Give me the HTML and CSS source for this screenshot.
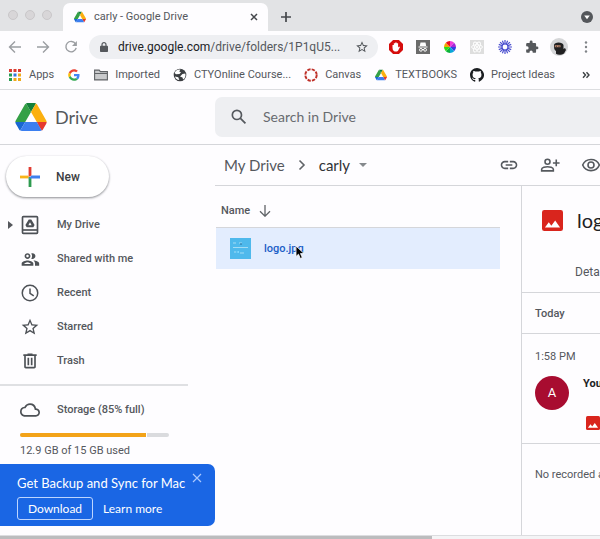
FILE: index.html
```html
<!DOCTYPE html>
<html lang="en">
<head>
<meta charset="utf-8">
<title>carly - Google Drive</title>
<link rel="stylesheet" href="styles.css">
</head>
<body>
<svg class="defs" aria-hidden="true">
  <symbol id="drive" viewBox="0 0 87.3 78">
    <path d="m6.6 66.85 3.85 6.65c.8 1.4 1.95 2.5 3.3 3.3l13.75-23.8h-27.5c0 1.55.4 3.1 1.2 4.5z" fill="#1967d2"/>
    <path d="m43.65 25-13.75-23.8c-1.35.8-2.5 1.9-3.3 3.3l-25.4 44a9.06 9.06 0 0 0-1.2 4.5h27.5z" fill="#34a046"/>
    <path d="m73.55 76.8c1.35-.8 2.5-1.9 3.3-3.3l1.6-2.75 7.65-13.25c.8-1.4 1.2-2.95 1.2-4.5h-27.5l5.85 11.5z" fill="#e5392f"/>
    <path d="m43.65 25 13.75-23.8c-1.35-.8-2.9-1.2-4.5-1.2h-18.5c-1.6 0-3.15.45-4.5 1.2z" fill="#14803a"/>
    <path d="m59.8 53h-32.3l-13.75 23.8c1.35.8 2.9 1.2 4.5 1.2h50.8c1.6 0 3.15-.45 4.5-1.2z" fill="#3c7ff0"/>
    <path d="m73.4 26.5-12.7-22c-.8-1.4-1.95-2.5-3.3-3.3l-13.75 23.8 16.15 28h27.45c0-1.55-.4-3.1-1.2-4.5z" fill="#fbb010"/>
  </symbol>
  <symbol id="image" viewBox="3 3 18 18">
    <path fill="#d9251d" d="M5 3h14a2 2 0 0 1 2 2v14a2 2 0 0 1-2 2H5a2 2 0 0 1-2-2V5a2 2 0 0 1 2-2z"/>
    <path fill="#fff" d="M5.500 18l3.300-4.400 2.200 2.800 3.300-4.400L18.500 18z"/>
  </symbol>
  <symbol id="star" viewBox="0 0 24 24">
    <path d="M22 9.240l-7.190-.62L12 2 9.190 8.630 2 9.240l5.460 4.730L5.820 21 12 17.270 18.180 21l-1.630-7.030L22 9.240zM12 15.400l-3.760 2.270 1-4.280-3.320-2.880 4.380-.38L12 6.100l1.710 4.040 4.380.38-3.320 2.880 1 4.280L12 15.400z"/>
  </symbol>
</svg>

<header class="browser">
  <div class="tabstrip">
    <div class="lights"><i></i><i></i><i></i></div>
    <div class="tab">
      <svg class="i12"><use href="#drive"/></svg>
      <span class="tab-title">carly - Google Drive</span>
      <button class="plain" aria-label="Close tab"><svg class="i8" viewBox="0 0 8 8"><path d="M1 1l6 6M7 1L1 7" stroke="#45484c" stroke-width="1.500"/></svg></button>
    </div>
    <button class="plain new-tab" aria-label="New tab"><svg class="i12" viewBox="0 0 12 12"><path d="M6 1v10M1 6h10" stroke="#45484c" stroke-width="1.700"/></svg></button>
    <button class="plain tab-search" aria-label="Search tabs"><svg class="i12" viewBox="0 0 12 12"><circle cx="6" cy="6" r="6" fill="#54575b"/><path d="M3.200 4.500h5.600L6 8.200z" fill="#fff"/></svg></button>
  </div>

  <div class="toolbar">
    <div class="history">
      <button class="plain" aria-label="Back"><svg class="i14" viewBox="0 0 14 14" fill="none" stroke="#9b9ea2" stroke-width="1.400"><path d="M13 7H2M7 1.500L1.500 7 7 12.500"/></svg></button>
      <button class="plain" aria-label="Forward"><svg class="i14" viewBox="0 0 14 14" fill="none" stroke="#9b9ea2" stroke-width="1.400"><path d="M1 7h11M7 1.500L12.500 7 7 12.500"/></svg></button>
      <button class="plain" aria-label="Reload"><svg class="i14" viewBox="0 0 14 14" fill="none" stroke="#9b9ea2" stroke-width="1.400"><path d="M11.500 3.800A5.200 5.200 0 1 0 12.200 7.800"/><path d="M12.900 1v5H8z" fill="#9b9ea2" stroke="none"/></svg></button>
    </div>
    <div class="omnibox">
      <svg class="lock" viewBox="0 0 8 10"><rect y="3.700" width="8" height="6.300" rx=".8" fill="#55585c"/><path d="M2 4V2.700a2 2 0 0 1 4 0V4" fill="none" stroke="#55585c" stroke-width="1.200"/></svg>
      <span class="url"><b>drive.google.com</b>/drive/folders/1P1qU5...</span>
      <button class="plain" aria-label="Bookmark this page"><svg class="i14" fill="#505458"><use href="#star"/></svg></button>
    </div>
    <div class="extensions">
      <svg class="i14" viewBox="0 0 14 14"><path d="M4.100 0h5.800L14 4.100v5.800L9.900 14H4.100L0 9.900V4.100z" fill="#d50d0d"/><path d="M3.500 7.500V5h1.300V3.200h1.400V2.400h1.500v.8h1.400v4.400l.9-1.100 1 .6-1.800 3.400c-.5.800-1 1.100-1.900 1.100-2.400 0-3.800-1.100-3.800-4.100z" fill="#fff"/></svg>
      <svg class="i14" viewBox="0 0 14 14"><path d="M0 0h14v14H0z" fill="#6b6b6b"/><path d="M4.500 2.500h5L10.200 6H3.800zM2.500 6.600h9v.8h-9z" fill="#fff"/><g fill="none" stroke="#fff"><circle cx="4.900" cy="9.800" r="1.400"/><circle cx="9.100" cy="9.800" r="1.400"/><path d="M6 9.500h2"/></g></svg>
      <svg class="i12" viewBox="-6 -6 12 12"><path d="M0 0V-6A6 6 0 0 1 4.200-4.200z" fill="#f13bd8"/><path d="M0 0L4.200-4.200A6 6 0 0 1 6 0z" fill="#a927d6"/><path d="M0 0H6A6 6 0 0 1 4.200 4.200z" fill="#3340e4"/><path d="M0 0L4.200 4.200A6 6 0 0 1 0 6z" fill="#08a7d8"/><path d="M0 0V6A6 6 0 0 1-4.200 4.200z" fill="#0bb23c"/><path d="M0 0L-4.200 4.200A6 6 0 0 1-6 0z" fill="#2ddc14"/><path d="M0 0H-6A6 6 0 0 1-4.200-4.200z" fill="#f1a900"/><path d="M0 0L-4.200-4.200A6 6 0 0 1 0-6z" fill="#ed1020"/></svg>
      <svg class="i14" viewBox="-7 -7 14 14"><path d="M-7-7H7V7H-7z" fill="#dedede"/><g fill="none" stroke="#fff" stroke-width=".9"><ellipse rx="5.500" ry="2.200"/><ellipse rx="5.500" ry="2.200" transform="rotate(60)"/><ellipse rx="5.500" ry="2.200" transform="rotate(120)"/></g><circle r="1.100" fill="#fff"/></svg>
      <svg class="i14" viewBox="-7 -7 14 14" stroke="#4c51cf" stroke-width="1.200" fill="none"><circle r="3"/><path d="M0-3V-7M0 3V7M-3 0H-7M3 0H7M2.100-2.100L4.900-4.900M-2.100-2.100L-4.900-4.900M2.100 2.100L4.900 4.900M-2.100 2.100L-4.900 4.900M1.200-2.800L2.600-6.200M-1.200-2.800L-2.600-6.200M1.200 2.800L2.600 6.200M-1.200 2.800L-2.600 6.200M2.800-1.200L6.200-2.600M-2.800-1.200L-6.200-2.600M2.800 1.200L6.200 2.600M-2.800 1.200L-6.200 2.600"/></svg>
      <svg class="i14" viewBox="0 0 24 24" fill="#55585c"><path d="M20.500 11H19V7c0-1.100-.9-2-2-2h-4V3.500a2.500 2.500 0 0 0-5 0V5H4a2 2 0 0 0-2 2v3.800h1.500a2.700 2.700 0 0 1 0 5.400H2V20c0 1.100.9 2 2 2h3.800v-1.500a2.700 2.700 0 0 1 5.400 0V22H17a2 2 0 0 0 2-2v-4h1.500a2.500 2.500 0 0 0 0-5z"/></svg>
      <svg class="i18" viewBox="0 0 18 18"><circle cx="9" cy="9" r="9" fill="#d5d6d8"/><path d="M4 7c0-3.500 9-3.500 9.500 0v4l1.500-1 1 2-2 3.500c-2 1.500-6 1.800-8 .3L6 13c-2-1-2-3-2-6z" fill="#202021"/><path d="M4.800 7.200h5.700v2H4.800z" fill="#c58d72"/><path d="M5.800 7.700h1v1h-1zM8.500 7.700h1v1h-1z" fill="#202021"/></svg>
      <svg class="dots" viewBox="0 0 4 12" fill="#808488"><circle cx="2" cy="1.500" r="1.200"/><circle cx="2" cy="6" r="1.200"/><circle cx="2" cy="10.500" r="1.200"/></svg>
    </div>
  </div>

  <nav class="bookmarks" aria-label="Bookmarks">
    <a href="#"><svg class="i14" viewBox="-1 -1 14 14"><path d="M0 0h3v3H0zM4.500 0h3v3h-3zM9 0h3v3H9z" fill="#db3c31"/><path d="M0 4.500h3v3H0z" fill="#279c50"/><path d="M4.500 4.500h3v3h-3z" fill="#3479dd"/><path d="M9 4.500h3v3H9zM4.500 9h3v3h-3zM9 9h3v3H9z" fill="#efaa19"/><path d="M0 9h3v3H0z" fill="#279c50"/></svg>Apps</a>
    <a href="#" aria-label="Google"><svg class="i14" viewBox="-5 -5 58 58"><path fill="#4285f4" d="M46.980 24.550c0-1.570-.15-3.090-.38-4.550H24v9.020h12.940c-.58 2.960-2.260 5.480-4.780 7.180l7.730 6c4.510-4.180 7.090-10.360 7.090-17.650z"/><path fill="#ea4335" d="M24 9.500c3.540 0 6.710 1.220 9.210 3.600l6.850-6.850C35.900 2.380 30.470 0 24 0 14.620 0 6.510 5.380 2.560 13.220l7.980 6.190C12.430 13.720 17.740 9.500 24 9.500z"/><path fill="#fbbc05" d="M10.530 28.590c-.48-1.450-.76-2.990-.76-4.590s.27-3.140.76-4.590l-7.980-6.190C.92 16.460 0 20.120 0 24s.92 7.540 2.560 10.780l7.970-6.190z"/><path fill="#34a853" d="M24 48c6.480 0 11.930-2.130 15.890-5.810l-7.730-6c-2.150 1.450-4.920 2.300-8.160 2.300-6.260 0-11.570-4.220-13.470-9.910l-7.980 6.190C6.510 42.620 14.620 48 24 48z"/></svg></a>
    <a href="#"><svg class="i14" viewBox="0 0 14 14"><path d="M.6 11.900V2.100h4.600l1.200 1.500h7v8.300zM.6 5.500h12.800" fill="#c9cacc" stroke="#606366" stroke-width="1.100"/></svg>Imported</a>
    <a href="#"><svg class="i14" viewBox="0 0 14 14"><circle cx="7" cy="7" r="6.300" fill="#3c3f43"/><path d="M7.500 1.500l-1.300 2 1.800.8L6.500 6 3 6.200 1.600 5C2.200 3 4.500 1 7.500 1.500zM9.500 6l2.800-.5c.7 2.500-.2 4.800-2.200 6l-.6-2L7 8.500zM2 8.500l3.300.7 1 2.900C4 12 2.500 10.500 2 8.500z" fill="#fff"/></svg>CTYOnline Course...</a>
    <a href="#"><svg class="i14" viewBox="0 0 14 14"><circle cx="7" cy="7" r="5.700" fill="none" stroke="#bf3029" stroke-width="1.900" stroke-dasharray="3.300 1.177"/></svg>Canvas</a>
    <a href="#"><svg class="i14"><use href="#drive" x="1" y="1" width="12" height="12"/></svg>TEXTBOOKS</a>
    <a href="#"><svg class="i14" viewBox="0 0 16 16" fill="#1c1f22"><path d="M8 0C3.580 0 0 3.580 0 8c0 3.540 2.290 6.530 5.470 7.590.4.070.55-.17.55-.38 0-.19-.01-.82-.01-1.490-2.010.37-2.530-.49-2.690-.94-.09-.23-.48-.94-.82-1.130-.28-.15-.68-.52-.01-.53.63-.01 1.080.58 1.230.82.720 1.210 1.870.87 2.330.66.070-.52.28-.87.510-1.070-1.780-.2-3.640-.89-3.640-3.950 0-.87.310-1.590.82-2.150-.08-.2-.36-1.020.080-2.120 0 0 .67-.21 2.200.82a7.600 7.600 0 0 1 4 0c1.530-1.040 2.200-.82 2.200-.82.44 1.100.16 1.920.080 2.120.51.560.82 1.270.82 2.150 0 3.070-1.870 3.750-3.650 3.950.29.25.54.73.54 1.480 0 1.070-.01 1.930-.01 2.200 0 .21.15.46.55.38A8 8 0 0 0 8 0z"/></svg>Project Ideas</a>
    <button class="plain more" aria-label="More bookmarks"><svg class="i8" viewBox="0 0 8 8" fill="none" stroke="#3c4043" stroke-width="1.400"><path d="M1 1.200L3.500 4 1 6.800M4.500 1.200L7 4 4.500 6.800"/></svg></button>
  </nav>
</header>

<div class="app-header">
  <a class="brand" href="#"><svg class="logo"><use href="#drive"/></svg>Drive</a>
  <form class="search">
    <svg class="i20" viewBox="0 0 24 24" fill="#55595e"><path d="M20.490 19l-5.730-5.730C15.530 12.200 16 10.910 16 9.500A6.500 6.500 0 1 0 9.500 16c1.410 0 2.700-.47 3.770-1.240L19 20.490 20.490 19zM5 9.500C5 7.010 7.010 5 9.500 5S14 7.010 14 9.500 11.990 14 9.500 14 5 11.990 5 9.500z"/></svg>
    <input type="search" placeholder="Search in Drive" aria-label="Search in Drive">
  </form>
</div>

<div class="app">
  <aside class="sidebar">
    <button class="new"><svg class="plus" viewBox="0 0 20 20"><path d="M8.600 0h2.800v8.600L8.600 10z" fill="#e13c32"/><path d="M0 8.600h8.600v2.800H0z" fill="#f8b418"/><path d="M8.600 10h2.800v10H8.600z" fill="#2f9b4f"/><path d="M11.400 8.600H20v2.800H8.600z" fill="#3f80ed"/></svg>New</button>
    <nav class="menu" aria-label="Drive">
      <a href="#" class="expandable"><svg class="i20" viewBox="0 0 24 24" fill="none" stroke="#4d5156" stroke-width="2"><rect x="3" y="2" width="18" height="20" rx="1"/><path d="M3 18h18"/><path d="M10.500 5.500h3l4 6.500-1.500 2.800H8L6.500 12zM12 8.800l-2 3.500h4z" fill="#4d5156" stroke="none" fill-rule="evenodd"/></svg>My Drive</a>
      <a href="#"><svg class="i20" viewBox="0 0 24 24" fill="#4d5156"><path d="M9 13.750c-2.340 0-7 1.170-7 3.500V20h14v-2.750c0-2.330-4.660-3.500-7-3.500zM4.340 18c.84-.58 2.870-2.250 4.660-2.250S12.820 17.420 13.660 18H4.340zM9 12c1.930 0 3.500-1.570 3.500-3.500S10.930 5 9 5 5.500 6.570 5.500 8.500 7.070 12 9 12zm0-5c.83 0 1.500.67 1.500 1.500S9.830 10 9 10s-1.500-.67-1.500-1.500S8.170 7 9 7zM16.040 13.810C17.200 14.650 18 15.770 18 17.250V20h5v-2.750c0-2.020-3.500-3.170-6.960-3.440zM15 12c1.930 0 3.500-1.570 3.500-3.500S16.930 5 15 5c-.54 0-1.040.13-1.500.35.63.89 1 1.980 1 3.150s-.37 2.260-1 3.150c.46.220.96.350 1.500.350z"/></svg>Shared with me</a>
      <a href="#"><svg class="i20" viewBox="0 0 24 24" fill="none" stroke="#4d5156" stroke-width="1.800"><circle cx="12" cy="12" r="9.300"/><path d="M12 6.500V12.500l4.500 3"/></svg>Recent</a>
      <a href="#"><svg class="i20" fill="#4d5156"><use href="#star"/></svg>Starred</a>
      <a href="#"><svg class="i20" viewBox="0 0 24 24" fill="#4d5156"><path d="M15 4V3H9v1H4v2h1v13c0 1.100.9 2 2 2h10c1.100 0 2-.9 2-2V6h1V4h-5zm2 15H7V6h10v13zM9 8h2v9H9zM13 8h2v9h-2z"/></svg>Trash</a>
    </nav>
    <section class="storage">
      <a href="#"><svg class="i20" viewBox="0 0 24 24" fill="#4d5156"><path d="M19.350 10.040A7.490 7.490 0 0 0 12 4C9.110 4 6.600 5.640 5.350 8.040A5.990 5.990 0 0 0 0 14c0 3.310 2.690 6 6 6h13c2.760 0 5-2.240 5-5 0-2.640-2.050-4.780-4.650-4.960zM19 18H6c-2.210 0-4-1.790-4-4 0-2.050 1.530-3.760 3.560-3.970l1.070-.11.5-.95A5.470 5.470 0 0 1 12 6c2.620 0 4.880 1.860 5.390 4.430l.3 1.500 1.530.11A2.980 2.980 0 0 1 22 15c0 1.650-1.350 3-3 3z"/></svg>Storage (85% full)</a>
      <div class="meter"><span style="width:85%"></span></div>
      <p>12.9 GB of 15 GB used</p>
    </section>
    <section class="promo">
      <h2>Get Backup and Sync for Mac</h2>
      <button class="plain close" aria-label="Dismiss"><svg class="i10" viewBox="0 0 10 10"><path d="M1 1l8 8M9 1L1 9" stroke="#a9c8ff" stroke-width="1.200"/></svg></button>
      <div class="promo-actions"><button class="download">Download</button><a href="#">Learn more</a></div>
    </section>
  </aside>

  <main class="main">
    <div class="pathbar">
      <nav class="crumbs" aria-label="Path">
        <a href="#">My Drive</a>
        <svg class="chevron" viewBox="0 0 8 12"><path d="M1.500 1.500L6 6l-4.500 4.500" fill="none" stroke="#606468" stroke-width="1.600"/></svg>
        <a href="#" class="current">carly<svg class="caret" viewBox="0 0 8 4"><path d="M0 0h8L4 4z" fill="#85898d"/></svg></a>
      </nav>
      <div class="actions">
        <button class="plain" aria-label="Get link"><svg class="i20" viewBox="0 0 24 24" fill="#55595e"><path d="M3.900 12c0-1.710 1.390-3.100 3.100-3.100h4V7H7c-2.760 0-5 2.240-5 5s2.240 5 5 5h4v-1.900H7c-1.710 0-3.100-1.390-3.100-3.100zM8 13h8v-2H8v2zm9-6h-4v1.900h4c1.710 0 3.100 1.390 3.100 3.100s-1.390 3.100-3.100 3.100h-4V17h4c2.760 0 5-2.240 5-5s-2.240-5-5-5z"/></svg></button>
        <button class="plain" aria-label="Share"><svg class="i20" viewBox="0 0 24 24" fill="none" stroke="#55595e" stroke-width="1.900"><circle cx="9" cy="8" r="3"/><path d="M2 19v-2c0-2 4.700-3 7-3s7 1 7 3v2zM19.500 5.500v8M15.500 9.500h8"/></svg></button>
        <button class="plain" aria-label="Preview"><svg class="i20" viewBox="0 0 24 24" fill="none" stroke="#55595e" stroke-width="1.900"><path d="M2 12C3.700 7.800 7.500 5.300 12 5.300S20.300 7.800 22 12c-1.700 4.200-5.500 6.700-10 6.700S3.700 16.200 2 12z"/><circle cx="12" cy="12" r="3.600"/></svg></button>
      </div>
    </div>
    <div class="content">
      <table class="files">
        <thead><tr><th scope="col"><span>Name<svg class="sort" viewBox="0 0 12 12"><path d="M6 0v11M1 6.200l5 5 5-5" fill="none" stroke="#606468" stroke-width="1.300"/></svg></span></th></tr></thead>
        <tbody><tr><td>
          <div class="file">
            <svg class="thumb" viewBox="0 0 21 21"><path d="M0 0h21v21H0z" fill="#4fb9ec"/><path d="M3 5h3M9 5h3M3 9.500h15M4 14h2M10 15h4" stroke="#a4dcf5"/><path d="M10 6h2" stroke="#2471a0"/><path d="M6 14l3-1v2z" fill="#8df"/></svg>
            <span class="filename">logo.jpg<svg class="cursor" viewBox="0 0 10 15"><path d="M1 1v10.500l2.500-2.300 1.800 4.300 2-.9-1.800-4.100H9z" fill="#000" stroke="#fff" stroke-width=".8"/></svg></span>
          </div>
        </td></tr></tbody>
      </table>
      <aside class="details">
        <h1><svg class="file-icon"><use href="#image"/></svg>logo.jpg</h1>
        <div class="details-tabs"><button class="plain">Details</button></div>
        <h3>Today</h3>
        <section class="event">
          <time>1:58 PM</time>
          <div class="event-row">
            <span class="avatar">A</span>
            <div class="event-body"><b>You uploaded an item</b><svg class="i14"><use href="#image"/></svg></div>
          </div>
        </section>
        <p class="none">No recorded activity before today</p>
      </aside>
    </div>
  </main>
</div>
<div class="scrollbar"><span></span></div>
</body>
</html>
```
FILE: styles.css
```css
* { box-sizing: border-box; }
body {
  margin: 0;
  min-height: 100vh;
  display: flex;
  flex-direction: column;
  overflow: hidden;
  background: #fefdff;
  color: #55585d;
  font: 11px/16px Roboto, "Liberation Sans", sans-serif;
  white-space: nowrap;
}
a { color: inherit; text-decoration: none; }
button { font: inherit; color: inherit; cursor: pointer; }
svg { display: block; flex: none; }
.defs { position: absolute; width: 0; height: 0; }
.plain { display: flex; align-items: center; justify-content: center; padding: 0; border: 0; background: none; }
.i8 { width: 8px; height: 8px; }
.i10 { width: 10px; height: 10px; }
.i12 { width: 12px; height: 12px; }
.i14 { width: 14px; height: 14px; }
.i18 { width: 18px; height: 18px; }
.i20 { width: 20px; height: 20px; }

/* Browser window */
.browser { border-bottom: 1px solid #dcdde0; }
.tabstrip { display: flex; align-items: center; height: 31px; padding: 3px 7px 0 8px; background: #e2e3e5; }
.lights { display: flex; gap: 7px; width: 55px; margin-top: -4px; }
.lights i { width: 10px; height: 10px; border: 1px solid #c9c7c9; border-radius: 50%; background: #d8d6d8; }
.tab { display: flex; align-items: center; gap: 8px; width: 205px; height: 28px; padding: 0 10px 0 11px; border-radius: 7px 7px 0 0; background: #fefdff; }
.tab-title { flex: 1; }
.new-tab { margin-left: 12px; }
.tab-search { margin-left: auto; }
.toolbar { display: flex; align-items: center; gap: 4px; height: 32px; padding-left: 1px; }
.history { display: grid; grid-template-columns: repeat(3, 28px); }
.omnibox { display: flex; flex: 1; align-items: center; height: 24px; padding: 0 9px 0 11px; border-radius: 12px; background: #eeeff2; font-size: 12px; }
.lock { width: 8px; height: 10px; }
.url { flex: 1; margin-left: 10px; }
.url b { color: #202124; font-weight: 400; }
.extensions { display: grid; grid-template-columns: repeat(8, 1fr); place-items: center; width: 218px; }
.dots { width: 4px; height: 12px; }
.bookmarks { display: flex; align-items: center; gap: 13px; height: 26px; padding: 0 10px 4px 8px; }
.bookmarks a { display: flex; align-items: center; gap: 7px; }
.bookmarks { padding-bottom: 3px; }
.more { margin-left: auto; }

/* Drive header */
.app-header { display: flex; align-items: center; height: 55px; border-bottom: 1px solid #d5d6da; }
.brand { display: flex; align-items: center; gap: 8px; width: 215px; padding-left: 15px; font: 18px/24px Lato, sans-serif; }
.logo { width: 32px; height: 28px; }
.search { display: flex; flex: 1; align-items: center; gap: 14px; height: 40px; padding-left: 14px; border-radius: 7px 0 0 7px; background: #eeeff2; }
.search input { flex: 1; min-width: 0; padding: 0; border: 0; outline: 0; background: none; font: 14px/20px Lato, sans-serif; }
.search input::placeholder { color: #686b70; opacity: 1; }

/* Sidebar */
.app { display: flex; flex: 1; }
.sidebar { width: 215px; flex: none; font-weight: 500; }
.new { display: flex; align-items: center; gap: 16px; width: 103px; height: 41px; margin: 11px 0 11px 6px; padding: 0 14px; border: 0; border-radius: 21px; background: #fff; color: #3c4043; box-shadow: 0 1px 2px #9c9da1, 0 1px 3px #d4d5d8; font: 500 12px/16px Roboto, sans-serif; }
.plus { width: 20px; height: 20px; }
.menu a, .storage a { display: flex; align-items: center; gap: 17px; height: 34px; padding-left: 20px; }
.menu { position: relative; }
.expandable::before { content: ""; position: absolute; left: 8px; border-left: 5px solid #55585d; border-block: 4px solid transparent; }
.storage { margin-top: 6px; }
.storage::before { content: ""; display: block; width: 188px; height: 2px; margin-bottom: 7px; background: #dfe0e3; }
.meter { width: 149px; height: 4px; margin: 6px 0 6px 20px; border-radius: 2px; background: #dadbde; overflow: hidden; }
.meter span { display: block; height: 100%; border-right: 1px solid #fff; background: #f3a319; }
.storage p { margin: 0 0 5px 20px; font-weight: 400; }
.promo { display: grid; grid-template-columns: 1fr auto; padding: 9px 13px 6px 17px; border-radius: 0 7px 7px 0; background: #1a66e4; color: #fff; }
.promo h2 { margin: 0; font: 13px/20px Lato, sans-serif; }
.close { height: 10px; }
.promo-actions { display: flex; grid-column: 1 / -1; align-items: center; gap: 10px; margin-top: 4px; font: 12px/16px Lato, sans-serif; }
.download { width: 76px; height: 23px; padding: 0; border: 1px solid #bdd5ff; border-radius: 3px; background: none; }

/* Main column */
.main { display: flex; flex: 1; flex-direction: column; min-width: 0; }
.pathbar { display: flex; align-items: center; justify-content: space-between; height: 41px; border-bottom: 1px solid #d5d6da; overflow: hidden; }
.crumbs, .current { display: flex; align-items: center; }
.crumbs { gap: 13px; padding-left: 9px; font: 15px/20px Lato, sans-serif; }
.current { gap: 9px; color: #303236; }
.chevron { width: 8px; height: 12px; }
.caret { width: 8px; height: 4px; }
.actions { display: flex; gap: 21px; margin-right: -1px; }
.content { display: flex; flex: 1; }
.files { flex: 1; align-self: flex-start; border-collapse: collapse; margin: 0 21px 0 1px; }
.files thead { display: block; }
.files tbody, .files tr, .files td, .files th { display: block; padding: 0; }
.files th span { display: flex; align-items: center; gap: 9px; height: 41px; padding: 8px 0 0 5px; font-weight: 500; }
.sort { width: 12px; height: 12px; }
.file { display: flex; align-items: center; gap: 13px; height: 42px; padding-left: 14px; border-top: 1px solid #d5d6da; background: #e3edfe; color: #1b5fc7; font-weight: 500; }
.thumb { width: 21px; height: 21px; }
.filename { position: relative; }
.cursor { position: absolute; left: 31px; top: 4px; width: 10px; height: 15px; }

/* Details panel */
.details { width: 79px; flex: none; overflow: hidden; border-left: 1px solid #d5d6da; }
.details h1 { display: flex; align-items: center; gap: 14px; height: 68px; margin: 0; padding-left: 20px; color: #202124; font: 20px/24px Lato, sans-serif; }
.file-icon { width: 21px; height: 21px; }
.details-tabs { display: flex; height: 39px; padding-left: 53px; border-bottom: 1px solid #d5d6da; }
.details-tabs button { height: 35px; font-size: 12px; }
.details h3 { height: 41px; margin: 0; padding-left: 13px; border-bottom: 1px solid #d5d6da; font: 500 11px/41px Roboto, sans-serif; }
.event { padding: 15px 0 13px 13px; border-bottom: 1px solid #d5d6da; }
.event time { display: block; }
.event-row { display: flex; gap: 14px; margin-top: 11px; }
.avatar { width: 34px; height: 34px; flex: none; border-radius: 50%; background: #a80c30; color: #fff; font-size: 13px; line-height: 34px; text-align: center; }
.event-body b { display: block; color: #202124; font-weight: 700; }
.event-body svg { margin: 24px 0 0 3px; }
.none { margin: 23px 0 0 13px; }

.scrollbar { height: 4px; border-top: 1px solid #dcdde0; background: #f4f4f6; }
.scrollbar span { display: block; width: 72%; height: 3px; background: #bcbcbe; }
```
